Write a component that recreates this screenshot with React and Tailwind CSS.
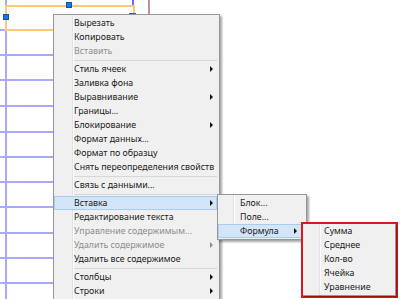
const mainItems = [
  { t: 'Вырезать' },
  { t: 'Копировать' },
  { t: 'Вставить', d: true },
  'sep',
  { t: 'Стиль ячеек', sub: true },
  { t: 'Заливка фона' },
  { t: 'Выравнивание', sub: true },
  { t: 'Границы...' },
  { t: 'Блокирование', sub: true },
  { t: 'Формат данных...' },
  { t: 'Формат по образцу' },
  { t: 'Снять переопределения свойств' },
  'sep',
  { t: 'Связь с данными...' },
  'sep',
  { t: 'Вставка', sub: true, active: true },
  { t: 'Редактирование текста' },
  { t: 'Управление содержимым...', d: true },
  { t: 'Удалить содержимое', d: true, sub: true },
  { t: 'Удалить все содержимое' },
  'sep',
  { t: 'Столбцы', sub: true },
  { t: 'Строки', sub: true },
];

const insertItems = [{ t: 'Блок...' }, { t: 'Поле...' }, { t: 'Формула', sub: true, active: true }];
const formulaItems = ['Сумма', 'Среднее', 'Кол-во', 'Ячейка', 'Уравнение'];

const rowHeights = [31, 25, 25, 26, 26, 25, 25, 25, 26, 25, 25, 40];

function Arrow({ disabled }) {
  return (
    <span
      className={`ml-auto h-0 w-0 border-y-[3px] border-l-[3px] border-y-transparent ${
        disabled ? 'border-l-[#8d8d8d]' : 'border-l-[#111]'
      }`}
    />
  );
}

function Item({ item, gutter, textPad, arrowPad }) {
  return (
    <div
      className={`flex h-[14px] items-center border ${
        item.active ? 'border-[#a9cdee] bg-[#d3e5f6]' : 'border-transparent'
      } ${item.d ? 'text-[#8d8d8d]' : 'text-[#1a1a1a]'}`}
      style={{ paddingLeft: gutter + textPad, paddingRight: arrowPad }}
    >
      <span className="whitespace-nowrap">{item.t}</span>
      {item.sub && <Arrow disabled={item.d} />}
    </div>
  );
}

function Separator({ gutter }) {
  return (
    <div className="flex h-[4px] items-center" style={{ paddingLeft: gutter }}>
      <div className="h-px flex-1 bg-[#d7d7d7]" />
    </div>
  );
}

export default function App() {
  return (
    <div className="relative h-[299px] w-[400px] overflow-hidden bg-white font-['Noto_Sans',sans-serif] text-[8.8px] leading-none">
      {/* sheet grid */}
      <div className="flex w-[134px] flex-col">
        {rowHeights.map((h, i) => (
          <div key={i} className="flex border-b-2 border-[#a9a9ff]" style={{ height: h }}>
            <div className="w-[5px]" />
            <div className="flex-1 border-l-2 border-[#a9a9ff]" />
          </div>
        ))}
      </div>

      {/* selected object */}
      <div className="absolute left-[132px] top-0 h-[6px] w-[2px] bg-[#6a6aff]" />
      <div className="absolute left-[148px] top-0 h-[15px] w-[2px] bg-[#b89494]" />
      <div className="absolute left-[5px] top-[5px] h-[26px] w-[130px] border-2 border-[#ffc878]" />
      <div className="absolute left-[66px] top-[2px] h-[6px] w-[6px] border border-[#1f4f8f] bg-[#0b7cf2]" />
      <div className="absolute left-[3px] top-[14px] h-[6px] w-[6px] border border-[#1f4f8f] bg-[#0b7cf2]" />
      <div className="absolute left-[129px] top-[13px] h-[6px] w-[7px] border border-[#3d5f86] bg-[#6283aa]" />

      {/* context menu */}
      <div className="absolute left-[53px] top-[14px] w-[167px] border border-[#979797] bg-[#f0f0f0] pt-px pb-[2px] shadow-[2px_2px_2px_rgba(0,0,0,0.35)]">
        <div className="absolute bottom-0 left-[18px] top-0 w-px bg-[#e2e2e2]" />
        <div className="absolute bottom-0 left-[19px] top-0 w-px bg-white" />
        <div className="relative pr-[2px]">
          {mainItems.map((item, i) =>
            item === 'sep' ? (
              <Separator key={i} gutter={20} />
            ) : (
              <Item key={i} item={item} gutter={19} textPad={0} arrowPad={3} />
            )
          )}
        </div>
      </div>

      {/* insert submenu */}
      <div className="absolute left-[217px] top-[194px] w-[90px] border border-[#979797] bg-[#f0f0f0] pt-px pb-px shadow-[2px_2px_2px_rgba(0,0,0,0.35)]">
        <div className="absolute bottom-0 left-[15px] top-0 w-px bg-[#e2e2e2]" />
        <div className="absolute bottom-0 left-[16px] top-0 w-px bg-white" />
        <div className="relative pr-[4px]">
          {insertItems.map((item, i) => (
            <Item key={i} item={item} gutter={16} textPad={5} arrowPad={4} />
          ))}
        </div>
      </div>

      {/* formula submenu, outlined */}
      <div className="absolute left-[301px] top-[222px] w-[97px] border-2 border-[#e0161b]">
        <div className="relative border-b border-r border-[#979797] bg-[#f0f0f0] pb-px shadow-[1px_1px_1px_rgba(0,0,0,0.3)]">
          <div className="absolute bottom-0 left-[16px] top-0 w-px bg-[#e2e2e2]" />
          <div className="absolute bottom-0 left-[17px] top-0 w-px bg-white" />
          <div className="relative">
            {formulaItems.map((t) => (
              <Item key={t} item={{ t }} gutter={18} textPad={2} arrowPad={4} />
            ))}
          </div>
        </div>
      </div>
    </div>
  );
}
